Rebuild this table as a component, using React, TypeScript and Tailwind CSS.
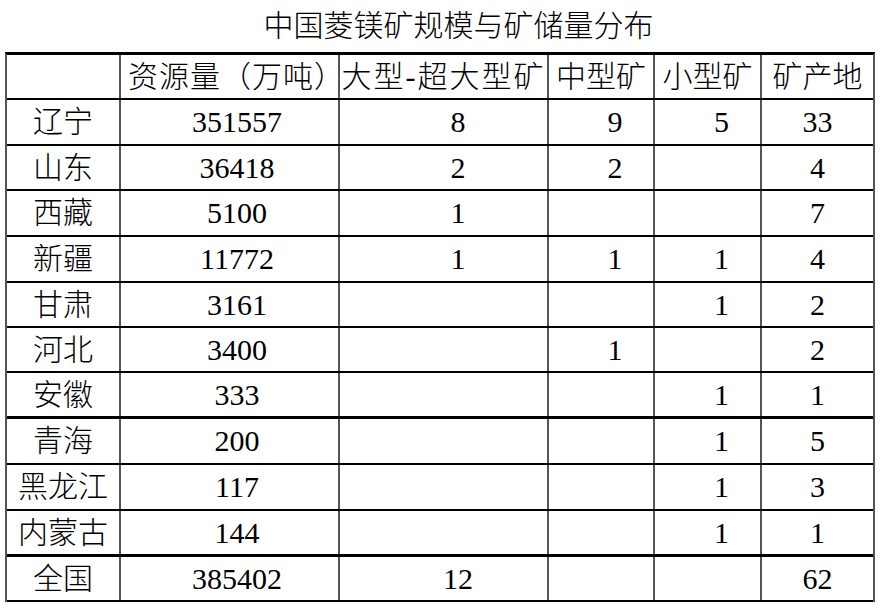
import React from "react";

const rows: { name: string; cells: string[]; h: string; thick?: boolean }[] = [
  { name: "辽宁", cells: ["351557", "8", "9", "5", "33"], h: "h-[46px]" },
  { name: "山东", cells: ["36418", "2", "2", "", "4"], h: "h-[45px]" },
  { name: "西藏", cells: ["5100", "1", "", "", "7"], h: "h-[46px]" },
  { name: "新疆", cells: ["11772", "1", "1", "1", "4"], h: "h-[46px]" },
  { name: "甘肃", cells: ["3161", "", "", "1", "2"], h: "h-[45px]" },
  { name: "河北", cells: ["3400", "", "1", "", "2"], h: "h-[45px]" },
  { name: "安徽", cells: ["333", "", "", "1", "1"], h: "h-[46px]", thick: true },
  { name: "青海", cells: ["200", "", "", "1", "5"], h: "h-[46px]" },
  { name: "黑龙江", cells: ["117", "", "", "1", "3"], h: "h-[46px]" },
  { name: "内蒙古", cells: ["144", "", "", "1", "1"], h: "h-[46px]", thick: true },
  { name: "全国", cells: ["385402", "12", "", "", "62"], h: "h-[45px]" },
];

// column widths include the 2px right rule; padding nudges the numbers like the original sheet
const cols = [
  "w-[219px] pl-[15px]",
  "w-[209px] pl-[29px]",
  "w-[106px] pl-[28px]",
  "w-[107px] pl-[28px]",
];

export default function App() {
  return (
    <div
      className="w-[887px] h-[613px] bg-white text-black"
      style={{ fontFamily: '"Liberation Serif", "Noto Sans CJK SC", serif' }}
    >
      {/* 标题 */}
      <div className="h-[52px] flex items-center justify-center pl-[30px] text-[30px] leading-none font-light">
        中国菱镁矿规模与矿储量分布
      </div>

      {/* 表格 */}
      <div className="ml-[5px] w-[870px] border-t-[3px] border-t-black border-l-2 border-l-[#555] border-r-2 border-r-[#555] text-[30px] leading-none">
        <div className="flex h-[45px] border-b-2 border-black font-light">
          <div className="w-[114px] shrink-0 border-r-2 border-[#555]" />
          <div className="w-[219px] shrink-0 border-r-2 border-[#555] flex items-center justify-center pl-[14px] whitespace-nowrap tracking-[1px]">
            资源量（万吨）
          </div>
          <div className="w-[209px] shrink-0 border-r-2 border-[#555] flex items-center justify-center whitespace-nowrap tracking-[2px]">
            大型-超大型矿
          </div>
          <div className="w-[106px] shrink-0 border-r-2 border-[#555] flex items-center justify-center whitespace-nowrap">
            中型矿
          </div>
          <div className="w-[107px] shrink-0 border-r-2 border-[#555] flex items-center justify-center whitespace-nowrap">
            小型矿
          </div>
          <div className="flex-1 flex items-center justify-center whitespace-nowrap">矿产地</div>
        </div>

        {rows.map((r) => (
          <div
            key={r.name}
            className={`flex ${r.h} border-black ${r.thick ? "border-b-[3px]" : "border-b-2"}`}
          >
            <div className="w-[114px] shrink-0 border-r-2 border-[#555] flex items-center justify-center whitespace-nowrap font-light">
              {r.name}
            </div>
            {r.cells.slice(0, 4).map((c, i) => (
              <div
                key={i}
                className={`${cols[i]} shrink-0 border-r-2 border-[#555] flex items-center justify-center`}
              >
                {c}
              </div>
            ))}
            <div className="flex-1 flex items-center justify-center">{r.cells[4]}</div>
          </div>
        ))}
      </div>
    </div>
  );
}
